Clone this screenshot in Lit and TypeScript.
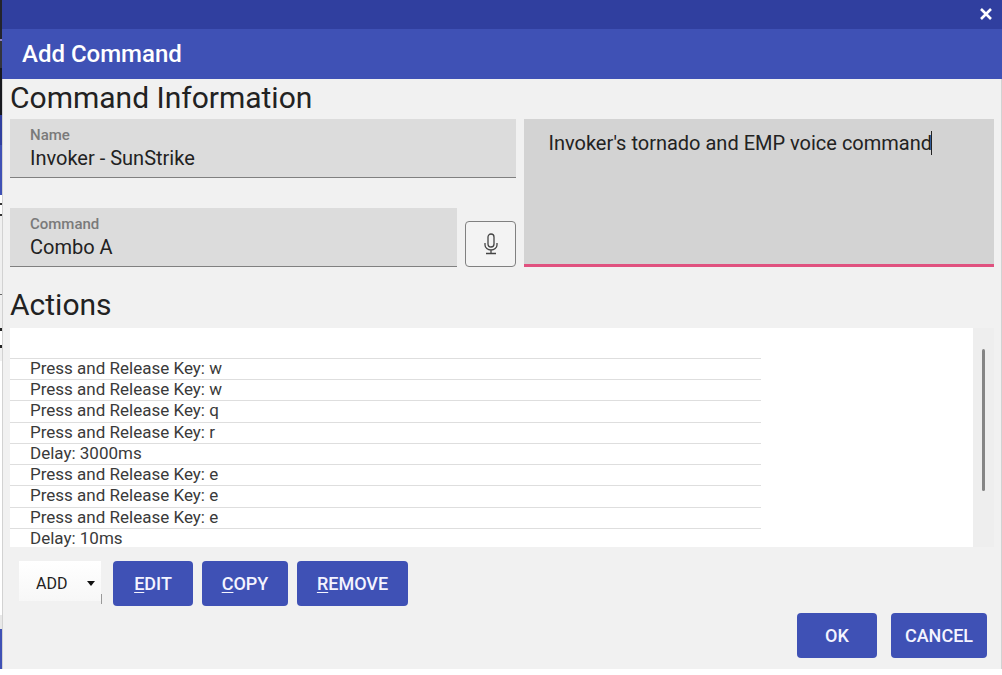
import { LitElement, html, css, svg } from "lit";
import { customElement, state } from "lit/decorators.js";

const micIcon = svg`
  <rect x="7" y="1" width="6" height="13" rx="3"></rect>
  <path d="M4 10v2a6 5 0 0 0 12 0v-2M10 17v3M5 20.5h10"></path>`;

@customElement("app-root")
export class AppRoot extends LitElement {
  @state() private caretX = 0;

  private description = "Invoker's tornado and EMP voice command";

  private actions = [
    "Press and Release Key: w",
    "Press and Release Key: w",
    "Press and Release Key: q",
    "Press and Release Key: r",
    "Delay: 3000ms",
    "Press and Release Key: e",
    "Press and Release Key: e",
    "Press and Release Key: e",
    "Delay: 10ms",
  ];

  static styles = css`
    :host {
      display: block;
      min-height: 100vh;
      background: #fff;
      color: #222;
      font-family: Roboto, "Liberation Sans", sans-serif;
    }
    * { box-sizing: border-box; }
    h1, h2, ul { margin: 0; padding: 0; font-weight: 400; }
    button, input, textarea, select { font: inherit; color: inherit; margin: 0; border: 0; border-radius: 0; }

    .screen { display: flex; }
    .behind {
      width: 2px;
      flex: none;
      background: linear-gradient(
        #23242c 0 39px, #8d83c4 39px 41px, #33343c 41px 68px, #17181f 68px 115px,
        #303f9f 115px 145px, #3f51b5 145px 195px, #fff 195px 203px, #333 203px 205px,
        #fff 205px 214px, #333 214px 216px, #f0f0f0 216px 294px, #666 294px 295px,
        #f0f0f0 295px 328px, #222 328px 331px, #fff 331px 345px, #222 345px 348px,
        #f0f0f0 348px 361px, #fff 361px 615px, #e8e8e8 615px 629px, #3f51b5 629px);
    }
    .dialog { flex: 1; min-width: 0; background: #f1f1f1; }
    .system-bar {
      height: 29px;
      padding: 0 9px 2px 0;
      display: flex;
      justify-content: flex-end;
      align-items: center;
      background: #303f9f;
    }
    .close { width: 14px; height: 14px; padding: 0; background: none; display: flex; }
    .title-bar { height: 50px; padding-left: 20px; display: flex; align-items: center; background: #3f51b5; }
    .title { color: #fff; font-size: 24px; line-height: 28px; font-weight: 500; }
    .content {
      padding: 0 7px 11px 7px;
      border-left: 1px solid #d2d2d2;
      border-right: 1px solid #d2d2d2;
    }
    .heading { font-size: 30px; line-height: 38px; padding-bottom: 2px; }

    .info { display: grid; grid-template-columns: 507fr 470fr; gap: 8px; }
    .fields { display: flex; flex-direction: column; gap: 30px; }
    .voice { display: flex; align-items: flex-end; gap: 8px; }
    .field {
      flex: 1;
      min-width: 0;
      display: flex;
      flex-direction: column;
      height: 59px;
      padding: 6px 20px 0;
      background: #dcdcdc;
      border-bottom: 1px solid #808080;
    }
    .label { font-size: 15px; line-height: 20px; font-weight: 500; color: #7a7a7a; }
    .input { width: 100%; padding: 0; background: none; font-size: 20px; line-height: 26px; outline: 0; }
    .mic {
      width: 51px;
      height: 46px;
      display: flex;
      align-items: center;
      justify-content: center;
      background: #f3f3f3;
      border: 1px solid #808080;
      border-radius: 4px;
    }
    .mic-icon { fill: none; stroke: #444; stroke-width: 1.3; }
    .description { position: relative; display: flex; }
    .area {
      width: 100%;
      height: 148px;
      padding: 12px 24px;
      background: #d3d3d3;
      border-bottom: 3px solid #e0517f;
      font-size: 20px;
      line-height: 24px;
      resize: none;
      outline: 0;
      caret-color: transparent;
    }
    .caret { position: absolute; top: 12px; width: 1px; height: 24px; background: #222; }

    .actions-heading { padding-top: 19px; }
    .list-box { display: flex; height: 219px; margin-top: 2px; overflow: hidden; }
    .list { flex: 1; background: #fff; padding-top: 30px; }
    .rows { width: 78%; height: 191px; display: grid; grid-auto-rows: 1fr; list-style: none; }
    .row {
      padding-left: 20px;
      border-top: 1px solid #dedede;
      font-size: 17px;
      line-height: 19px;
      color: #3a3a3a;
      white-space: nowrap;
    }
    .track { width: 21px; padding: 21px 9px 0; background: #eee; }
    .thumb { width: 3px; height: 142px; border-radius: 2px; background: #858585; }

    .tools { display: flex; gap: 9px; padding: 14px 0 0 9px; }
    .add {
      position: relative;
      display: flex;
      align-items: flex-start;
      padding-right: 3px;
      background: linear-gradient(#999, #999) 82px 33px / 1px 10px no-repeat;
    }
    .add-select {
      appearance: none;
      width: 82px;
      height: 40px;
      padding: 4px 17px 0;
      background: linear-gradient(#fff, #f7f7f7);
      color: #222;
      font-size: 16px;
    }
    .arrow { position: absolute; right: 9px; top: 20px; pointer-events: none; }
    .button {
      height: 45px;
      padding: 0;
      border-radius: 4px;
      background: #3f51b5;
      color: #f4f4ff;
      font-size: 18px;
      font-weight: 500;
    }
    .w80 { width: 80px; }
    .w86 { width: 86px; }
    .w96 { width: 96px; }
    .w111 { width: 111px; }
    .key { text-decoration: underline; text-underline-offset: 2px; }
    .footer { display: flex; justify-content: flex-end; gap: 14px; padding: 7px 7px 0 0; }
  `;

  async firstUpdated() {
    await document.fonts.ready;
    const area = this.renderRoot.querySelector("textarea")!;
    const style = getComputedStyle(area);
    const ctx = document.createElement("canvas").getContext("2d")!;
    ctx.font = `${style.fontSize} ${style.fontFamily}`;
    this.caretX = parseInt(style.paddingLeft) + Math.floor(ctx.measureText(this.description).width);
  }

  render() {
    return html`
      <div class="screen">
        <div class="behind"></div>
        <main class="dialog">
          <div class="system-bar">
            <button class="close" aria-label="Close">
              <svg width="14" height="14" viewBox="0 0 14 14" fill="none" stroke="#fff" stroke-width="2.6">
                <path d="M2 2l10 10M12 2L2 12"></path>
              </svg>
            </button>
          </div>
          <header class="title-bar"><h1 class="title">Add Command</h1></header>
          <div class="content">
            <h2 class="heading">Command Information</h2>
            <div class="info">
              <div class="fields">
                <div class="field">
                  <label class="label" for="name">Name</label>
                  <input class="input" id="name" type="text" .value=${"Invoker - SunStrike"} />
                </div>
                <div class="voice">
                  <div class="field">
                    <label class="label" for="command">Command</label>
                    <input class="input" id="command" type="text" .value=${"Combo A"} />
                  </div>
                  <button class="mic" aria-label="Record voice command">
                    <svg class="mic-icon" width="20" height="22" viewBox="0 0 20 22">${micIcon}</svg>
                  </button>
                </div>
              </div>
              <div class="description">
                <textarea class="area" aria-label="Description" .value=${this.description}></textarea>
                <span class="caret" style="left:${this.caretX}px"></span>
              </div>
            </div>
            <h2 class="heading actions-heading">Actions</h2>
            <div class="list-box">
              <div class="list">
                <ul class="rows">
                  ${this.actions.map((a) => html`<li class="row">${a}</li>`)}
                </ul>
              </div>
              <div class="track"><div class="thumb"></div></div>
            </div>
            <div class="tools">
              <div class="add">
                <select class="add-select" aria-label="Add action"><option>ADD</option></select>
                <svg class="arrow" width="8" height="5" viewBox="0 0 8 5"><path d="M0 0h8L4 5z" fill="#111"></path></svg>
              </div>
              <button class="button w80"><span class="key">E</span>DIT</button>
              <button class="button w86"><span class="key">C</span>OPY</button>
              <button class="button w111"><span class="key">R</span>EMOVE</button>
            </div>
            <div class="footer">
              <button class="button w80">OK</button>
              <button class="button w96">CANCEL</button>
            </div>
          </div>
        </main>
      </div>
    `;
  }
}
